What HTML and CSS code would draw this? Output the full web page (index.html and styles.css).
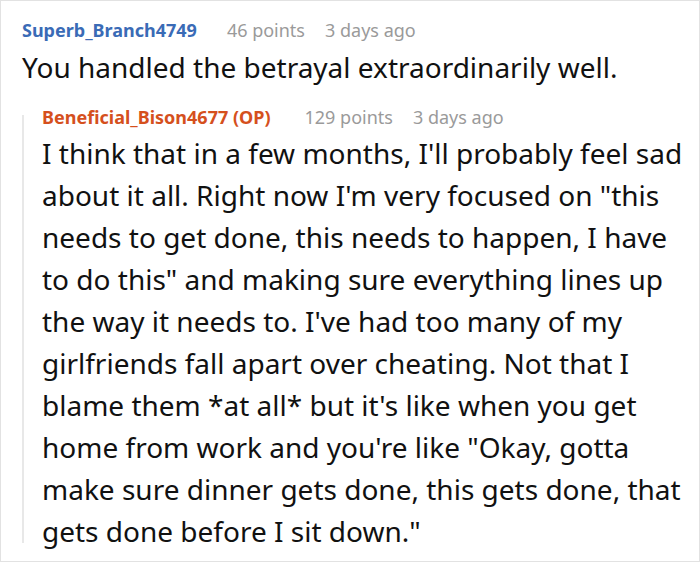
FILE: index.html
```html
<!DOCTYPE html>
<html>
<head>
<meta charset="utf-8">
<link rel="stylesheet" href="styles.css">
</head>
<body>
<div class="frame">
  <div class="comment">
    <div class="meta">
      <span class="user user-blue">Superb_Branch4749</span>
      <span class="info">46 points</span>
      <span class="info">3 days ago</span>
    </div>
    <p class="body">You handled the betrayal extraordinarily well.</p>
    <div class="reply">
      <div class="meta">
        <span class="user user-op">Beneficial_Bison4677 (OP)</span>
        <span class="info">129 points</span>
        <span class="info">3 days ago</span>
      </div>
      <p class="body">I think that in a few months, I'll probably feel sad about it all. Right now I'm very focused on "this needs to get done, this needs to happen, I have to do this" and making sure everything lines up the way it needs to. I've had too many of my girlfriends fall apart over cheating. Not that I blame them *at all* but it's like when you get home from work and you're like "Okay, gotta make sure dinner gets done, this gets done, that gets done before I sit down."</p>
    </div>
  </div>
</div>
</body>
</html>
```
FILE: styles.css
```css
html, body {
  margin: 0;
  padding: 0;
  background: #fff;
}
.frame {
  box-sizing: border-box;
  width: 700px;
  height: 562px;
  border: 1px solid #e2e2e2;
  font-family: "Noto Sans", "Open Sans", sans-serif;
  color: #111;
  overflow: hidden;
}
.comment {
  padding: 17px 8px 0 21px;
}
.meta {
  display: flex;
  gap: 20px;
  font-size: 18px;
  line-height: 24px;
}
.user {
  font-weight: 700;
  margin-right: 10px;
}
.user-blue {
  color: #3a6bb6;
}
.user-op {
  color: #d5501d;
  margin-right: 14px;
}
.info {
  color: #9a9a9a;
}
.body {
  margin: 4px 0 0;
  font-size: 28px;
  line-height: 42px;
}
.reply {
  position: relative;
  margin-top: 17px;
  padding-left: 20px;
}
.reply::before {
  content: "";
  position: absolute;
  left: 0;
  top: 10px;
  bottom: 9px;
  width: 2px;
  background: #e8e8e8;
}
.reply .body {
  margin-top: 3px;
}
```
